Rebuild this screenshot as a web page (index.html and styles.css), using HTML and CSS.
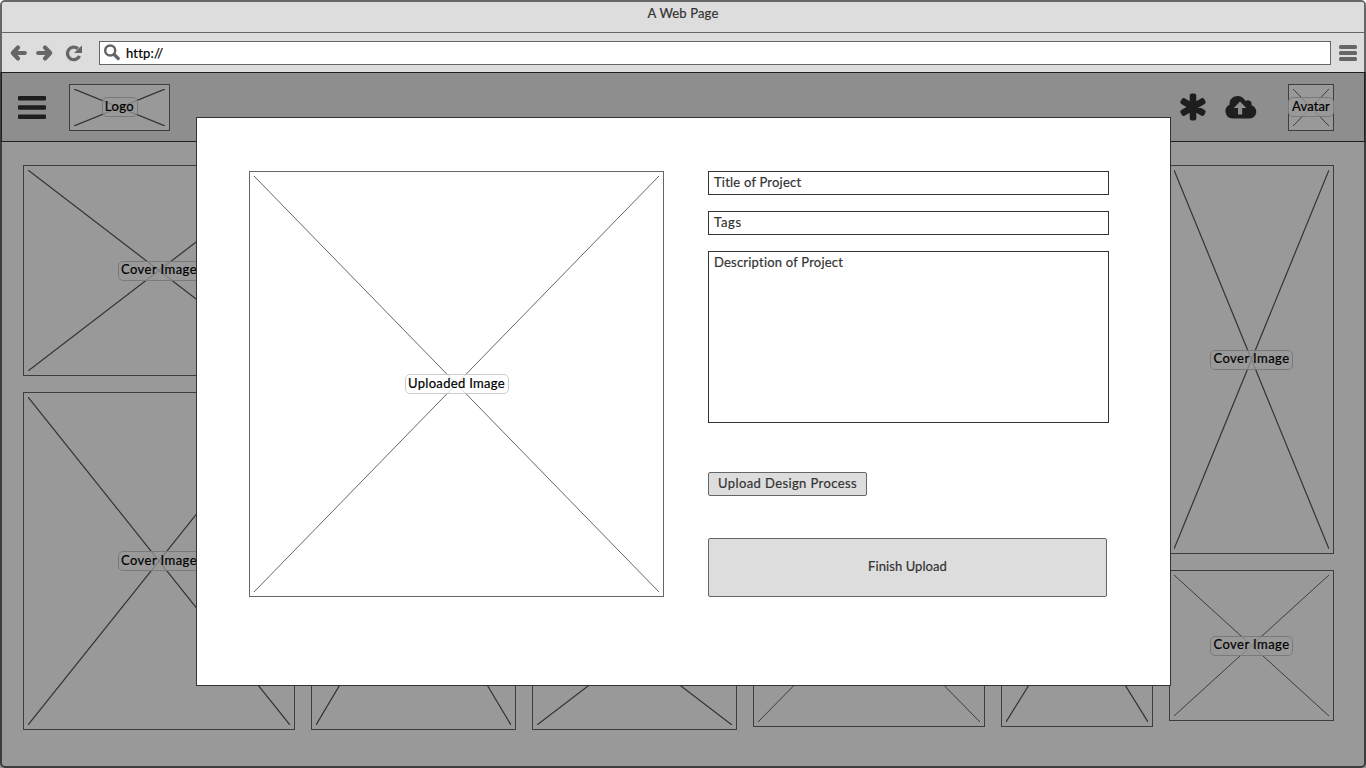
FILE: index.html
```html
<!DOCTYPE html>
<html lang="en">
<head>
<meta charset="utf-8">
<title>A Web Page</title>
<link rel="stylesheet" href="styles.css">
</head>
<body>
<svg class="defs" width="0" height="0">
  <symbol id="cross" viewBox="0 0 100 100" preserveAspectRatio="none">
    <path d="M0 0L100 100M0 100L100 0" vector-effect="non-scaling-stroke"/>
  </symbol>
</svg>
<div class="browser">
  <div class="titlebar"><span class="t-title">A Web Page</span></div>
  <div class="toolbar">
    <svg class="nav-icons" width="97" height="38" viewBox="0 0 97 38" fill="none" stroke="#666" stroke-width="4.2" stroke-linecap="round" stroke-linejoin="round">
      <path d="M16 13.5L10.8 19L16 24.5M11 19H22.8" />
      <path d="M43 13.5L48.2 19L43 24.5M48 19H36.2" />
      <path d="M76 14.7A6.3 6.3 0 1 0 77.5 22" stroke-width="3.3" stroke-linecap="butt"/>
      <path d="M80 11.5V19H72Z" fill="#666" stroke="none"/>
    </svg>
    <div class="address">
      <svg width="18" height="18" viewBox="0 0 18 18" fill="none" stroke="#666"><circle cx="6.2" cy="6.5" r="5" stroke-width="2.5"/><path d="M10.2 10.5L14.2 14.5" stroke-width="3.2" stroke-linecap="round"/></svg>
      <span class="t-url">http://</span>
    </div>
    <svg class="menu" width="18" height="18" viewBox="0 0 18 18" fill="#666"><rect y="1" width="18" height="4" rx="1.5"/><rect y="7" width="18" height="4" rx="1.5"/><rect y="13" width="18" height="4" rx="1.5"/></svg>
  </div>
  <header class="header">
    <svg class="burger" width="28" height="24" viewBox="0 0 28 24" fill="#333"><rect y="1" width="28" height="4.4" rx="1"/><rect y="10.3" width="28" height="4.4" rx="1"/><rect y="19.5" width="28" height="4.4" rx="1"/></svg>
    <div class="ph logo"><svg class="x"><use href="#cross"/></svg><span class="tag t-logo">Logo</span></div>
    <svg class="asterisk" width="28" height="28" viewBox="-14 -14 28 28" fill="none" stroke="#333" stroke-width="4" stroke-linejoin="round"><path fill="#333" d="M-1.3-11.6H1.3V11.6H-1.3ZM-10.7-4.7L-9.4-6.9L10.7 4.7L9.4 6.9ZM10.7-4.7L9.4-6.9L-10.7 4.7L-9.4 6.9Z"/></svg>
    <svg class="cloud" width="32" height="24" viewBox="0 0 32 24" fill="#333"><path fill-rule="evenodd" d="M7.5 23.5A7.2 7.2 0 0 1 4.6 9.8C4 4.6 7.8 1 12.6 1C16.3 1 19 3 20.4 6C23.7 4 27.6 6.6 26.5 10.4C29.5 11 31.3 13.8 31.3 16.8C31.3 20.5 28.3 23.5 24.6 23.5ZM15 6.5L8.8 13H13V19.5H17.2V13H21.3Z"/></svg>
    <div class="ph avatar"><svg class="x light"><use href="#cross"/></svg><span class="tag t-avatar">Avatar</span></div>
  </header>
  <main class="gallery">
    <div class="col c1">
      <div class="ph h211"><svg class="x"><use href="#cross"/></svg><span class="tag high">Cover Image</span></div>
      <div class="ph h338"><svg class="x"><use href="#cross"/></svg><span class="tag">Cover Image</span></div>
    </div>
    <div class="col c2"><div class="ph h338"><svg class="x"><use href="#cross"/></svg></div></div>
    <div class="col c2"><div class="ph h159"><svg class="x"><use href="#cross"/></svg></div></div>
    <div class="col c4"><div class="ph h236"><svg class="x light"><use href="#cross"/></svg></div></div>
    <div class="col c5"><div class="ph h239"><svg class="x"><use href="#cross"/></svg></div></div>
    <div class="col c6">
      <div class="ph h389"><svg class="x"><use href="#cross"/></svg><span class="tag high">Cover Image</span></div>
      <div class="ph h151"><svg class="x light"><use href="#cross"/></svg><span class="tag high">Cover Image</span></div>
    </div>
  </main>
</div>
<div class="overlay">
  <section class="modal">
    <div class="ph upload"><svg class="x light"><use href="#cross"/></svg><span class="tag t-up">Uploaded Image</span></div>
    <form class="form">
      <div class="field t-f1">Title of Project</div>
      <div class="field t-f2">Tags</div>
      <div class="field area t-f3">Description of Project</div>
      <button type="button" class="btn process">Upload Design Process</button>
      <button type="button" class="btn finish">Finish Upload</button>
    </form>
  </section>
</div>
</body>
</html>
```
FILE: styles.css
```css
* { box-sizing: border-box; }
html, body { margin: 0; height: 768px; overflow: hidden; }
body { position: relative; background: #fff; font: 400 13px/18px Lato, "Open Sans", sans-serif; letter-spacing: .45px; color: #333; }
span, .field, .btn { white-space: nowrap; -webkit-text-stroke: .2px currentColor; }
.defs { position: absolute; }
.browser { width: 1366px; height: 768px; border: 2px solid #666; border-radius: 5px; background: #fff; display: flex; flex-direction: column; }
.titlebar { height: 31px; flex: none; background: #ddd; border-bottom: 1px solid #666; border-radius: 3px 3px 0 0; text-align: center; padding-top: 2px; }
.t-title { letter-spacing: .15px; }
.toolbar { height: 39px; flex: none; background: #ddd; display: flex; align-items: center; }
.nav-icons { flex: none; }
.address { width: 1232px; height: 24px; margin-top: 1px; border: 1px solid #666; background: #fff; display: flex; align-items: center; gap: 4px; padding-left: 4px; color: #000; }
.t-url { letter-spacing: .2px; }
.menu { margin: 1px 0 0 8px; }
.header { height: 70px; flex: none; margin: 0 -1px; border: 1px solid #333; background: #ededed; display: flex; align-items: center; padding: 0 30px 0 16px; }
.burger { margin-right: 23px; }
.ph { border: 1px solid #666; background: #fff; padding: 4px; display: grid; grid-template: minmax(0, 1fr) / minmax(0, 1fr); place-items: center; flex: none; }
.x { grid-area: 1 / 1; width: 100%; height: 100%; stroke: #555; stroke-width: 1.2; fill: none; overflow: visible; }
.x.light { stroke: #666; stroke-width: 1; }
.tag { grid-area: 1 / 1; height: 20px; border: 1px solid #ccc; border-radius: 5px; background: rgba(255,255,255,.75); color: #000; padding: 0 2px; text-align: center; width: 83px; line-height: 17px; }
.tag.high { line-height: 15px; }
.logo { width: 101px; height: 47px; }
.tag.t-logo { width: 36px; }
.asterisk { margin-left: auto; margin-right: 18px; }
.cloud { margin-right: 31px; }
.avatar { width: 46px; height: 47px; }
.tag.t-avatar { width: 46px; padding: 0; margin: 0 -4px; letter-spacing: .15px; }
.gallery { padding: 23px 0 0 21px; display: flex; gap: 16px; }
.col { display: flex; flex-direction: column; gap: 16px; height: 565px; justify-content: flex-end; }
.c1 { width: 272px; }
.c2 { width: 205px; }
.c4 { width: 232px; height: 562px; }
.c5 { width: 152px; height: 562px; }
.c6 { width: 165px; height: 556px; }
.h211 { height: 211px; }
.h338 { height: 338px; }
.h159 { height: 159px; }
.h236 { height: 236px; }
.h239 { height: 239px; }
.h389 { height: 389px; }
.h151 { height: 151px; }
.overlay { position: absolute; left: 0; top: 72px; width: 1366px; height: 696px; background: rgba(0,0,0,.4); padding: 45px 0 0 196px; }
.modal { width: 975px; height: 569px; border: 1px solid #333; background: #fff; display: flex; gap: 44px; padding: 53px 0 0 52px; }
.upload { width: 415px; height: 426px; }
.tag.t-up { width: 104px; letter-spacing: .32px; }
.form { width: 401px; height: 426px; display: flex; flex-direction: column; align-items: flex-start; }
.field { width: 401px; height: 24px; border: 1px solid #333; padding: 1px 5px; margin-bottom: 16px; }
.t-f1, .t-f3 { letter-spacing: .21px; }
.t-f2 { letter-spacing: .7px; }
.area { height: 172px; margin-bottom: 49px; }
.btn { font: inherit; letter-spacing: .4px; color: #333; background: #ddd; border: 1px solid #666; border-radius: 2px; padding: 0; }
.process { width: 159px; height: 24px; padding-bottom: 2px; }
.finish { width: 399px; height: 59px; margin-top: 42px; padding-bottom: 3px; letter-spacing: .08px; }
```
